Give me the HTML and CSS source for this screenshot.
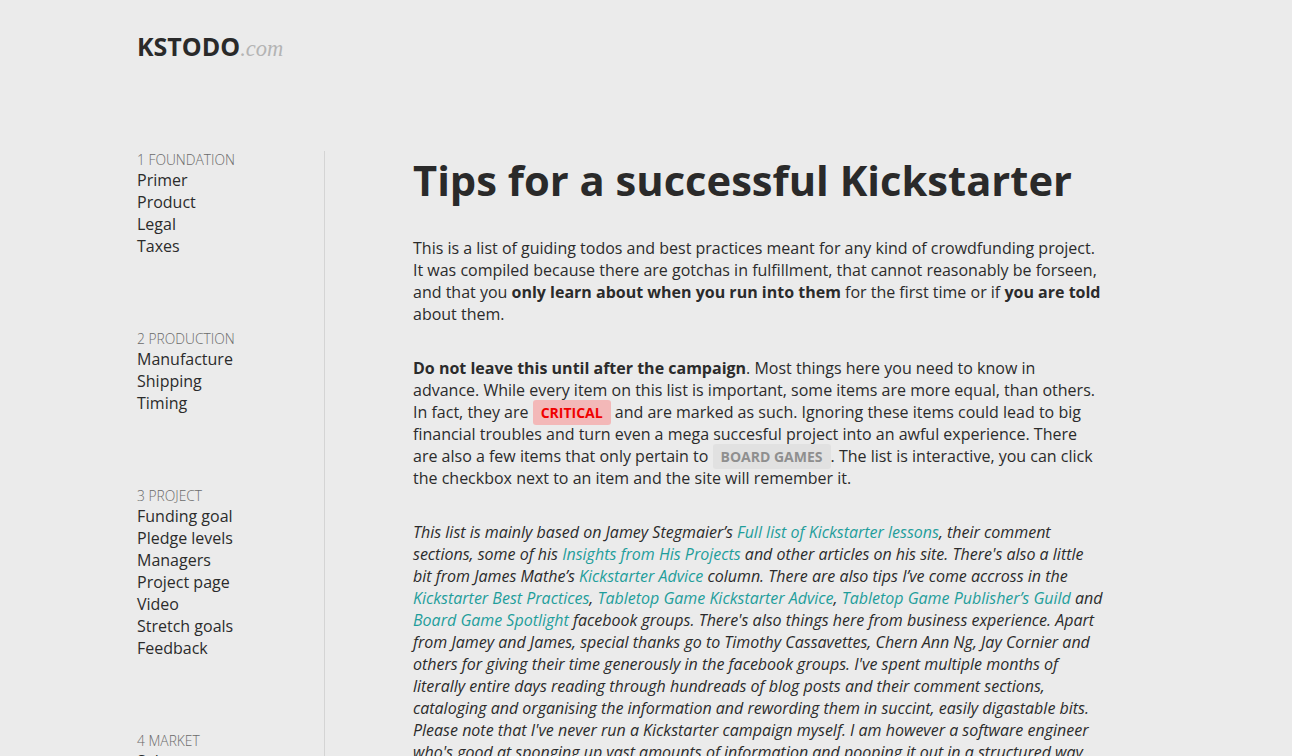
FILE: index.html
```html
<!DOCTYPE html>
<html lang="en">
<head>
<meta charset="utf-8">
<title>KSTODO - Tips for a successful Kickstarter</title>
<link rel="stylesheet" href="styles.css">
</head>
<body>
<div class="page">
  <header class="header">
    <a class="logo" href="#"><span class="logo-main">KSTODO</span><span class="logo-tld">.com</span></a>
  </header>
  <div class="layout">
    <nav class="sidebar">
      <div class="group">
        <div class="group-title">1 Foundation</div>
        <a class="nav-item" href="#">Primer</a>
        <a class="nav-item" href="#">Product</a>
        <a class="nav-item" href="#">Legal</a>
        <a class="nav-item" href="#">Taxes</a>
      </div>
      <div class="group">
        <div class="group-title">2 Production</div>
        <a class="nav-item" href="#">Manufacture</a>
        <a class="nav-item" href="#">Shipping</a>
        <a class="nav-item" href="#">Timing</a>
      </div>
      <div class="group">
        <div class="group-title">3 Project</div>
        <a class="nav-item" href="#">Funding goal</a>
        <a class="nav-item" href="#">Pledge levels</a>
        <a class="nav-item" href="#">Managers</a>
        <a class="nav-item" href="#">Project page</a>
        <a class="nav-item" href="#">Video</a>
        <a class="nav-item" href="#">Stretch goals</a>
        <a class="nav-item" href="#">Feedback</a>
      </div>
      <div class="group">
        <div class="group-title">4 Market</div>
        <a class="nav-item" href="#">Sales</a>
        <a class="nav-item" href="#">Marketing</a>
      </div>
    </nav>
    <main class="content">
      <h1 class="title">Tips for a successful Kickstarter</h1>
      <p>This is a list of guiding todos and best practices meant for any kind of crowdfunding project. It was compiled because there are gotchas in fulfillment, that cannot reasonably be forseen, and that you <strong>only learn about when you run into them</strong> for the first time or if <strong>you are told</strong> about them.</p>
      <p><strong>Do not leave this until after the campaign</strong>. Most things here you need to know in advance. While every item on this list is important, some items are more equal, than others. In fact, they are <span class="tag tag-critical">Critical</span> and are marked as such. Ignoring these items could lead to big financial troubles and turn even a mega succesful project into an awful experience. There are also a few items that only pertain to <span class="tag tag-board">Board games</span>. The list is interactive, you can click the checkbox next to an item and the site will remember it.</p>
      <p class="credits">This list is mainly based on Jamey Stegmaier’s <a href="#">Full list of Kickstarter lessons</a>, their comment sections, some of his <a href="#">Insights from His Projects</a> and other articles on his site. There's also a little bit from James Mathe’s <a href="#">Kickstarter Advice</a> column. There are also tips I’ve come accross in the <a href="#">Kickstarter Best Practices</a>, <a href="#">Tabletop Game Kickstarter Advice</a>, <a href="#">Tabletop Game Publisher’s Guild</a> and <a href="#">Board Game Spotlight</a> facebook groups. There's also things here from business experience. Apart from Jamey and James, special thanks go to Timothy Cassavettes, Chern Ann Ng, Jay Cornier and others for giving their time generously in the facebook groups. I've spent multiple months of literally entire days reading through hundreads of blog posts and their comment sections, cataloging and organising the information and rewording them in succint, easily digastable bits. Please note that I've never run a Kickstarter campaign myself. I am however a software engineer who's good at sponging up vast amounts of information and pooping it out in a structured way.</p>
    </main>
  </div>
</div>
</body>
</html>
```

FILE: styles.css
```css
html, body {
  margin: 0;
  padding: 0;
}
body {
  background: #ebebeb;
  color: #2b2b2b;
  font-family: "Open Sans", "Noto Sans", sans-serif;
  font-size: 16px;
  line-height: 22px;
}
a {
  text-decoration: none;
  color: inherit;
}
.page {
  width: 1018px;
  margin: 0 auto;
}
.header {
  padding-top: 30px;
  height: 32px;
}
.logo {
  display: inline-flex;
  align-items: baseline;
  line-height: 32px;
}
.logo-main {
  font-family: "Open Sans", sans-serif;
  font-weight: 700;
  font-size: 25px;
  color: #2a2a2a;
}
.logo-tld {
  font-family: "Liberation Serif", "DejaVu Serif", serif;
  font-style: italic;
  font-size: 22.5px;
  color: #b4b4b4;
}
.layout {
  display: flex;
  margin-top: 89px;
}
.sidebar {
  width: 187px;
  flex-shrink: 0;
  border-right: 1px solid #d4d4d4;
}
.group {
  display: flex;
  flex-direction: column;
  margin-bottom: 73px;
}
.group-title {
  font-size: 13.8px;
  font-weight: 300;
  line-height: 18px;
  text-transform: uppercase;
  color: #6a6a6a;
}
.nav-item {
  color: #2b2b2b;
  font-size: 16px;
  line-height: 22px;
}
.content {
  padding-left: 88px;
  width: 690px;
}
.title {
  font-size: 41.7px;
  font-weight: 700;
  line-height: 52px;
  margin: 3px 0 31px;
  color: #2a2a2a;
}
.content p {
  margin: 0 0 32px;
}
.content strong {
  font-weight: 700;
}
.tag {
  font-size: 14px;
  font-weight: 700;
  line-height: 14px;
  text-transform: uppercase;
  padding: 3px 8px;
  border-radius: 3px;
}
.tag-critical {
  background: #f3b8b8;
  color: #f00000;
}
.tag-board {
  background: #e1e1e1;
  color: #8f8f8f;
}
.credits {
  font-style: italic;
}
.credits a {
  color: #1f9e9b;
}
```
